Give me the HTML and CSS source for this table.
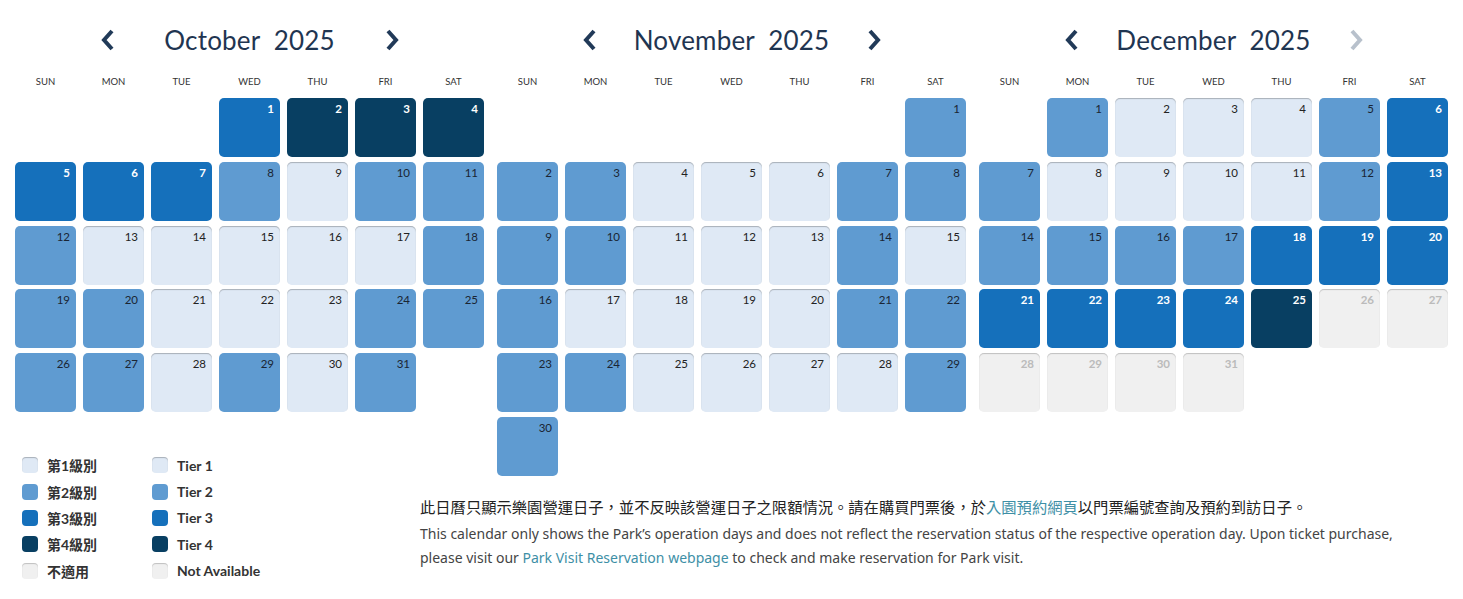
FILE: index.html
```html
<!DOCTYPE html>
<html>
<head>
	<title>Park Calendar</title>
	<meta charset="UTF-8">
	<meta name="viewport" content="width=device-width, initial-scale=1.0">
	<link rel="stylesheet" href="styles.css">
</head>
<body>
	<div class="page">

		<!-- October -->
		<div class="month oct">
			<div class="month-head">
				<span class="arrow"><svg viewBox="0 0 16 24"><path d="M12 3 L4 12 L12 21"/></svg></span>
				<span class="title">October&nbsp; 2025</span>
				<span class="arrow"><svg viewBox="0 0 16 24"><path d="M4 3 L12 12 L4 21"/></svg></span>
			</div>
			<div class="weekdays"><span>SUN</span><span>MON</span><span>TUE</span><span>WED</span><span>THU</span><span>FRI</span><span>SAT</span></div>
			<div class="days">
				<span class="day empty"></span><span class="day empty"></span><span class="day empty"></span>
				<span class="day t3">1</span><span class="day t4">2</span><span class="day t4">3</span><span class="day t4">4</span>
				<span class="day t3">5</span><span class="day t3">6</span><span class="day t3">7</span><span class="day t2">8</span><span class="day t1">9</span><span class="day t2">10</span><span class="day t2">11</span>
				<span class="day t2">12</span><span class="day t1">13</span><span class="day t1">14</span><span class="day t1">15</span><span class="day t1">16</span><span class="day t1">17</span><span class="day t2">18</span>
				<span class="day t2">19</span><span class="day t2">20</span><span class="day t1">21</span><span class="day t1">22</span><span class="day t1">23</span><span class="day t2">24</span><span class="day t2">25</span>
				<span class="day t2">26</span><span class="day t2">27</span><span class="day t1">28</span><span class="day t2">29</span><span class="day t1">30</span><span class="day t2">31</span>
			</div>
		</div>

		<!-- November -->
		<div class="month nov">
			<div class="month-head">
				<span class="arrow"><svg viewBox="0 0 16 24"><path d="M12 3 L4 12 L12 21"/></svg></span>
				<span class="title">November&nbsp; 2025</span>
				<span class="arrow"><svg viewBox="0 0 16 24"><path d="M4 3 L12 12 L4 21"/></svg></span>
			</div>
			<div class="weekdays"><span>SUN</span><span>MON</span><span>TUE</span><span>WED</span><span>THU</span><span>FRI</span><span>SAT</span></div>
			<div class="days">
				<span class="day empty"></span><span class="day empty"></span><span class="day empty"></span><span class="day empty"></span><span class="day empty"></span><span class="day empty"></span>
				<span class="day t2">1</span>
				<span class="day t2">2</span><span class="day t2">3</span><span class="day t1">4</span><span class="day t1">5</span><span class="day t1">6</span><span class="day t2">7</span><span class="day t2">8</span>
				<span class="day t2">9</span><span class="day t2">10</span><span class="day t1">11</span><span class="day t1">12</span><span class="day t1">13</span><span class="day t2">14</span><span class="day t1">15</span>
				<span class="day t2">16</span><span class="day t1">17</span><span class="day t1">18</span><span class="day t1">19</span><span class="day t1">20</span><span class="day t2">21</span><span class="day t2">22</span>
				<span class="day t2">23</span><span class="day t2">24</span><span class="day t1">25</span><span class="day t1">26</span><span class="day t1">27</span><span class="day t1">28</span><span class="day t2">29</span>
				<span class="day t2">30</span>
			</div>
		</div>

		<!-- December -->
		<div class="month dec">
			<div class="month-head">
				<span class="arrow"><svg viewBox="0 0 16 24"><path d="M12 3 L4 12 L12 21"/></svg></span>
				<span class="title">December&nbsp; 2025</span>
				<span class="arrow disabled"><svg viewBox="0 0 16 24"><path d="M4 3 L12 12 L4 21"/></svg></span>
			</div>
			<div class="weekdays"><span>SUN</span><span>MON</span><span>TUE</span><span>WED</span><span>THU</span><span>FRI</span><span>SAT</span></div>
			<div class="days">
				<span class="day empty"></span>
				<span class="day t2">1</span><span class="day t1">2</span><span class="day t1">3</span><span class="day t1">4</span><span class="day t2">5</span><span class="day t3">6</span>
				<span class="day t2">7</span><span class="day t1">8</span><span class="day t1">9</span><span class="day t1">10</span><span class="day t1">11</span><span class="day t2">12</span><span class="day t3">13</span>
				<span class="day t2">14</span><span class="day t2">15</span><span class="day t2">16</span><span class="day t2">17</span><span class="day t3">18</span><span class="day t3">19</span><span class="day t3">20</span>
				<span class="day t3">21</span><span class="day t3">22</span><span class="day t3">23</span><span class="day t3">24</span><span class="day t4">25</span><span class="day na">26</span><span class="day na">27</span>
				<span class="day na">28</span><span class="day na">29</span><span class="day na">30</span><span class="day na">31</span>
			</div>
		</div>

		<!-- legend -->
		<div class="legend">
			<ul>
				<li><i class="swatch t1"></i>第1級別</li>
				<li><i class="swatch t2"></i>第2級別</li>
				<li><i class="swatch t3"></i>第3級別</li>
				<li><i class="swatch t4"></i>第4級別</li>
				<li><i class="swatch na"></i>不適用</li>
			</ul>
			<ul>
				<li><i class="swatch t1"></i>Tier 1</li>
				<li><i class="swatch t2"></i>Tier 2</li>
				<li><i class="swatch t3"></i>Tier 3</li>
				<li><i class="swatch t4"></i>Tier 4</li>
				<li><i class="swatch na"></i>Not Available</li>
			</ul>
		</div>

		<div class="note">
			<p class="zh">此日曆只顯示樂園營運日子，並不反映該營運日子之限額情況。請在購買門票後，於<a href="#">入園預約網頁</a>以門票編號查詢及預約到訪日子。</p>
			<p class="en">This calendar only shows the Park’s operation days and does not reflect the reservation status of the respective operation day. Upon ticket purchase, please visit our <a href="#">Park Visit Reservation webpage</a> to check and make reservation for Park visit.</p>
		</div>

	</div>
</body>
</html>
```

FILE: styles.css
```css
html, body {
	margin: 0;
	padding: 0;
	background: #fff;
}

body {
	font-family: Lato, "Noto Sans CJK TC", sans-serif;
	color: #333;
}

.page {
	display: grid;
	grid-template-columns: 392px 64px 469px 469px;
	grid-template-rows: auto auto auto 1fr;
	column-gap: 13px;
	padding: 0 15px;
}

.oct { grid-column: 1 / 3; grid-row: 1; }
.nov { grid-column: 3; grid-row: 1 / 3; }
.dec { grid-column: 4; grid-row: 1; }
.legend { grid-column: 1; grid-row: 2 / 5; }
.note { grid-column: 2 / 5; grid-row: 3; }

/* month header */
.month-head {
	display: flex;
	justify-content: center;
	align-items: center;
	height: 32px;
	margin-top: 24px;
}

.month-head .title {
	width: 240px;
	text-align: center;
	font-size: 26px;
	letter-spacing: 0.2px;
	color: #1f3551;
	line-height: 32px;
}

.arrow {
	width: 44px;
	display: flex;
	justify-content: center;
}

.arrow svg {
	width: 16px;
	height: 24px;
	fill: none;
	stroke: #213a58;
	stroke-width: 4;
}

.arrow.disabled svg {
	stroke: #b8c1cc;
}

.weekdays {
	display: grid;
	grid-template-columns: repeat(7, 61px);
	column-gap: 7px;
	margin-top: 20px;
	margin-bottom: 10px;
	height: 12px;
}

.weekdays span {
	text-align: center;
	font-size: 9.5px;
	line-height: 12px;
	color: #333;
}

/* day cells */
.days {
	display: grid;
	grid-template-columns: repeat(7, 61px);
	grid-auto-rows: 59px;
	gap: 4.8px 7px;
}

.day {
	box-sizing: border-box;
	border-radius: 5px;
	text-align: right;
	padding: 4px 6px 0 0;
	font-size: 11.5px;
	line-height: 13px;
	font-weight: 700;
}

.day.empty { background: none; }

.t1 {
	background: #dfe9f5;
	color: #222;
	box-shadow: inset 0 1px 1px rgba(0, 0, 0, 0.25);
}

.t2 {
	background: #5f9bd1;
	color: #1a2533;
}

.t3 {
	background: #1570bb;
	color: #fff;
}

.t4 {
	background: #083f62;
	color: #fff;
}

.na {
	background: #f0f0f0;
	color: #bbb;
	box-shadow: inset 0 1px 1px rgba(0, 0, 0, 0.2);
}

.day.t1, .day.t2 {
	font-weight: 400;
}

/* legend */
.legend {
	display: flex;
	padding-top: 40px;
	padding-left: 7px;
}

.legend ul {
	list-style: none;
	margin: 0;
	padding: 0;
	width: 130px;
}

.legend li {
	display: flex;
	align-items: center;
	height: 26.3px;
	font-size: 14px;
	font-weight: 700;
	color: #333;
}

.swatch {
	width: 16px;
	height: 16px;
	border-radius: 4px;
	margin-right: 9px;
}

/* note */
.note {
	padding-top: 19px;
	color: #444;
	max-width: 1000px;
}

.note p {
	margin: 0;
	line-height: 24px;
}

.note p.zh {
	font-size: 15.3px;
	margin-bottom: 3px;
	color: #222;
}

.note p.en {
	font-family: "Noto Sans", sans-serif;
	font-size: 14px;
}

.note a {
	color: #3e8fa6;
	text-decoration: none;
}
```
